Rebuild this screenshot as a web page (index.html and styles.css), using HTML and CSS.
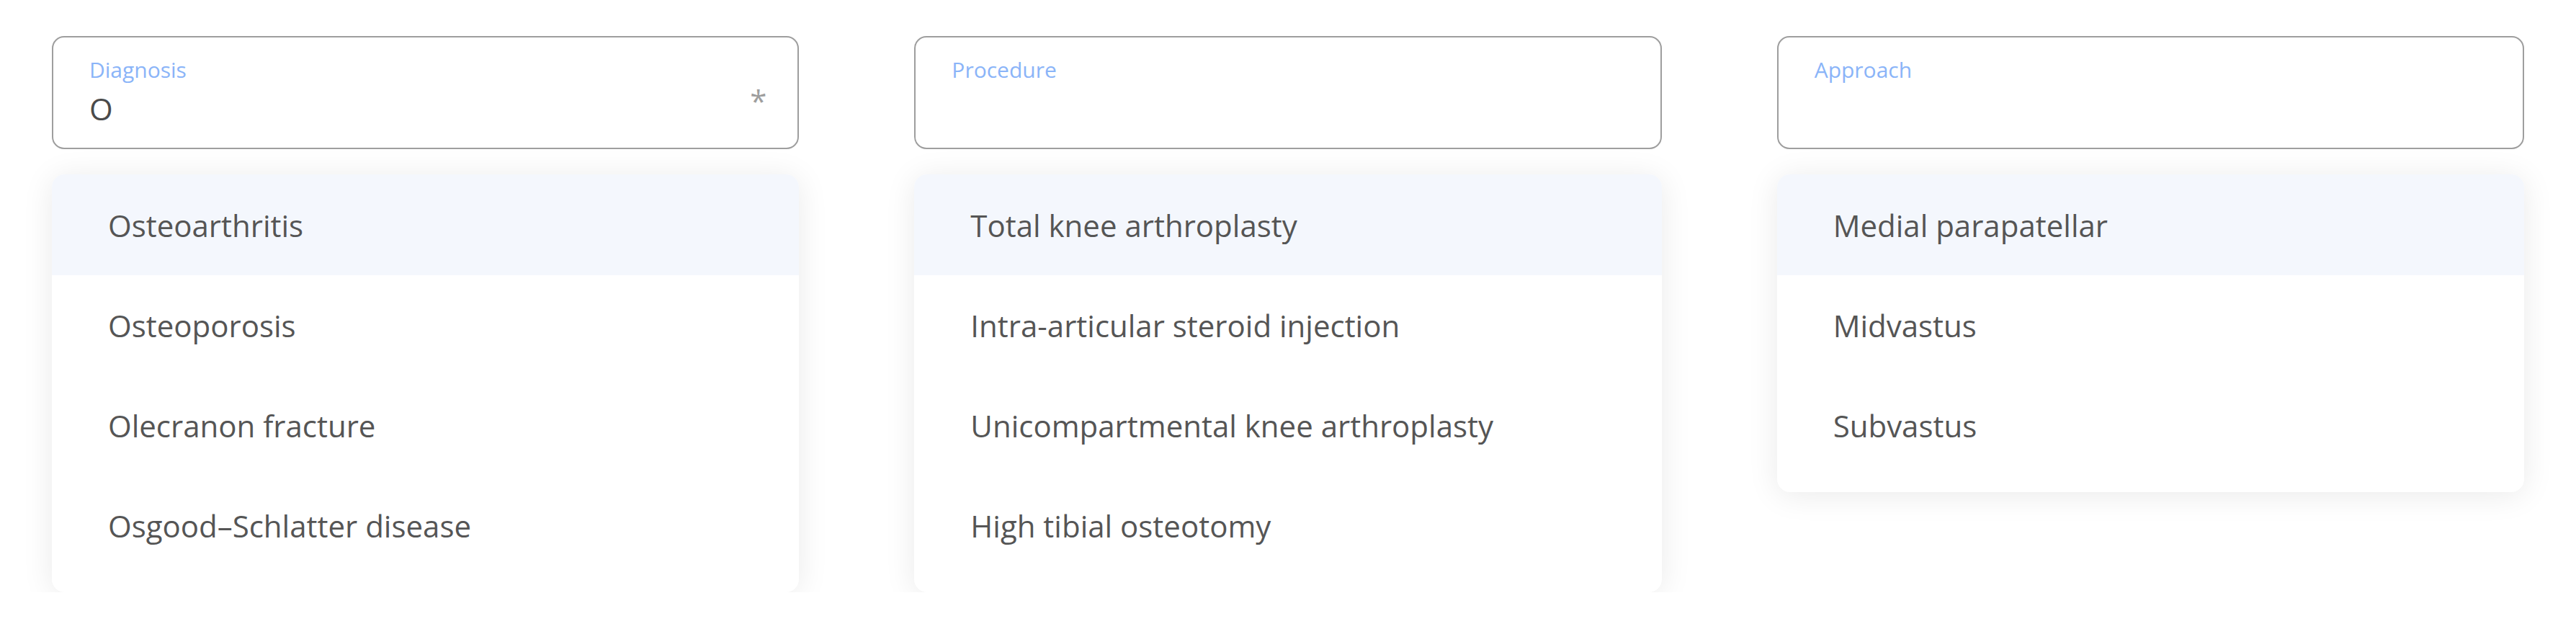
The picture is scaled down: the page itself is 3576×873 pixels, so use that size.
FILE: index.html
```html
<!DOCTYPE html>
<html lang="en">
<head>
<meta charset="utf-8">
<title>Autocomplete fields</title>
<link rel="stylesheet" href="styles.css">
</head>
<body>
<div class="fields">
  <div class="field">
    <div class="box">
      <div class="box-text">
        <div class="label">Diagnosis</div>
        <div class="value">O</div>
      </div>
      <span class="req">*</span>
    </div>
    <ul class="menu">
      <li class="option active">Osteoarthritis</li>
      <li class="option">Osteoporosis</li>
      <li class="option">Olecranon fracture</li>
      <li class="option">Osgood–Schlatter disease</li>
    </ul>
  </div>
  <div class="field">
    <div class="box">
      <div class="box-text">
        <div class="label">Procedure</div>
        <div class="value"></div>
      </div>
    </div>
    <ul class="menu">
      <li class="option active">Total knee arthroplasty</li>
      <li class="option">Intra-articular steroid injection</li>
      <li class="option">Unicompartmental knee arthroplasty</li>
      <li class="option">High tibial osteotomy</li>
    </ul>
  </div>
  <div class="field">
    <div class="box">
      <div class="box-text">
        <div class="label">Approach</div>
        <div class="value"></div>
      </div>
    </div>
    <ul class="menu">
      <li class="option active">Medial parapatellar</li>
      <li class="option">Midvastus</li>
      <li class="option">Subvastus</li>
    </ul>
  </div>
</div>
</body>
</html>
```
FILE: styles.css
```css
html, body {
  margin: 0;
  padding: 0;
  background: #ffffff;
}

body {
  font-family: "Open Sans", "Noto Sans", sans-serif;
  color: #555555;
}

.fields {
  display: grid;
  grid-template-columns: repeat(3, 1fr);
  column-gap: 160px;
  padding: 50px 72px 0 72px;
  align-items: start;
}

.field {
  display: flex;
  flex-direction: column;
}

.box {
  display: flex;
  align-items: flex-start;
  border: 2px solid #9e9e9e;
  border-radius: 17px;
  padding: 25px 43px 26px 50px;
  background: #ffffff;
}

.box-text {
  flex: 1;
  display: flex;
  flex-direction: column;
  gap: 6px;
}

.label {
  font-size: 30px;
  line-height: 40px;
  color: #8ab4f8;
}

.value {
  font-size: 42px;
  line-height: 56px;
  height: 56px;
  color: #4a4a4a;
}

.req {
  font-size: 42px;
  line-height: 42px;
  margin-top: 42px;
  color: #9e9e9e;
}

.menu {
  list-style: none;
  margin: 35px 0 0 0;
  padding: 0 0 23px 0;
  background: #ffffff;
  border-radius: 18px;
  overflow: hidden;
  box-shadow: 0 4px 44px rgba(0, 0, 0, 0.085);
}

.option {
  font-size: 42px;
  line-height: 57px;
  padding: 41px 40px 41px 78px;
  color: #555555;
}

.option.active {
  background: #f4f7fd;
  padding-top: 42px;
}
```
